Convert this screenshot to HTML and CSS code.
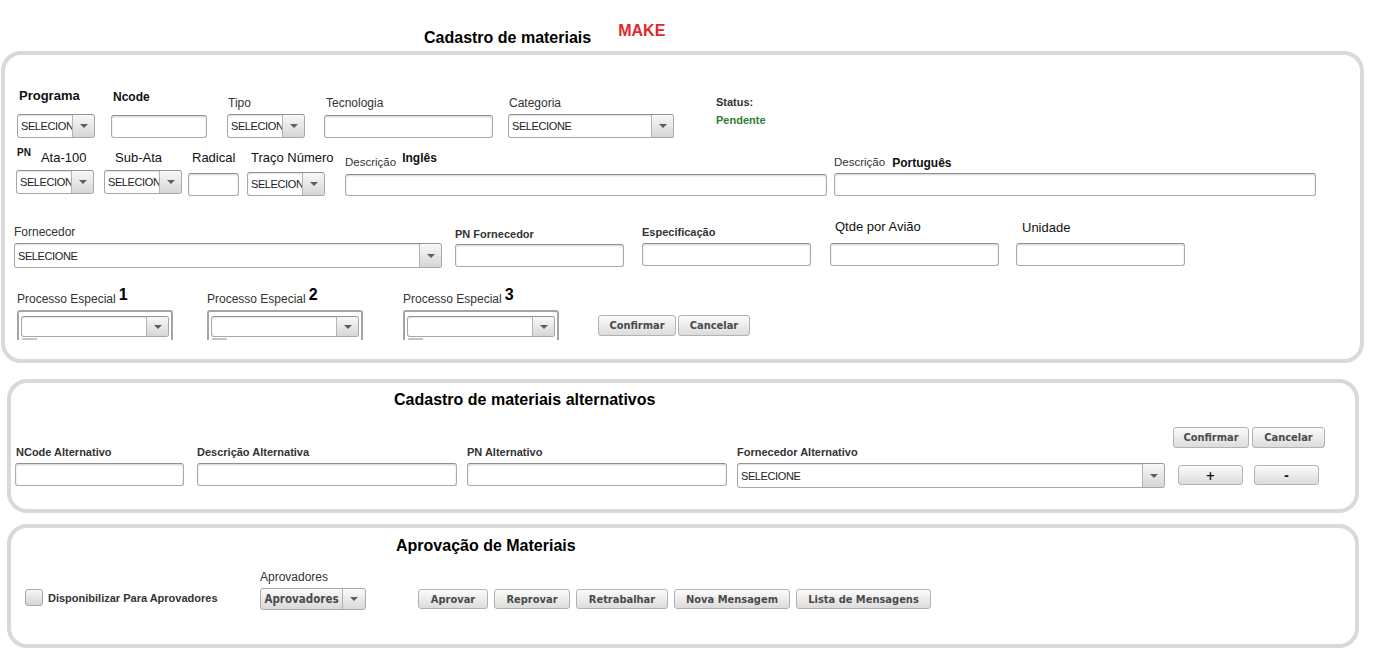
FILE: index.html
```html
<!DOCTYPE html>
<html lang="pt">
<head>
<meta charset="utf-8">
<title>Cadastro de materiais</title>
<link rel="stylesheet" href="styles.css">
</head>
<body>
<header class="head">
  <h1 class="title head-title">Cadastro de materiais</h1>
  <span class="make">MAKE</span>
</header>

<section class="panel p1">
  <div class="row r1">
    <div class="field w78 ml12">
      <label class="lbl lbl-13b mb10 pl2">Programa</label>
      <div class="sel h24"><span class="sel-text">SELECIONE</span><span class="sel-btn"><i class="caret"></i></span></div>
    </div>
    <div class="field w96 ml16">
      <label class="lbl lbl-12b mb11 pl2">Ncode</label>
      <input class="inp" type="text">
    </div>
    <div class="field w78 ml20">
      <label class="lbl mb4 pl1">Tipo</label>
      <div class="sel h24"><span class="sel-text">SELECIONE</span><span class="sel-btn"><i class="caret"></i></span></div>
    </div>
    <div class="field w169 ml19">
      <label class="lbl mb5 pl2">Tecnologia</label>
      <input class="inp" type="text">
    </div>
    <div class="field w166 ml15">
      <label class="lbl mb4 pl1">Categoria</label>
      <div class="sel h24"><span class="sel-text">SELECIONE</span><span class="sel-btn"><i class="caret"></i></span></div>
    </div>
    <div class="status ml42">
      <div class="status-lbl">Status:</div>
      <div class="status-val">Pendente</div>
    </div>
  </div>

  <div class="row r2">
    <div class="field w78 ml11 cb2">
      <div class="lbl-pn mb4 pl1"><span class="pn">PN</span><span class="lbl-13 ata">Ata-100</span></div>
      <div class="sel h24"><span class="sel-text">SELECIONE</span><span class="sel-btn"><i class="caret"></i></span></div>
    </div>
    <div class="field w78 ml10 cb2">
      <label class="lbl lbl-13 mb4 pl11">Sub-Ata</label>
      <div class="sel h24"><span class="sel-text">SELECIONE</span><span class="sel-btn"><i class="caret"></i></span></div>
    </div>
    <div class="field w51 ml6">
      <label class="lbl lbl-13 mb7 pl4">Radical</label>
      <input class="inp" type="text">
    </div>
    <div class="field w78 ml8">
      <label class="lbl lbl-13 mb6 pl4">Traço Número</label>
      <div class="sel h24"><span class="sel-text">SELECIONE</span><span class="sel-btn"><i class="caret"></i></span></div>
    </div>
    <div class="field w482 ml20">
      <div class="lbl-desc mb5"><span class="desc desc-en">Descrição</span><span class="lang">Inglês</span></div>
      <input class="inp h22" type="text">
    </div>
    <div class="field w482 ml7">
      <div class="lbl-desc mb3"><span class="desc">Descrição</span><span class="lang lang-pt">Português</span></div>
      <input class="inp" type="text">
    </div>
  </div>

  <div class="row r3">
    <div class="field w428 ml9">
      <label class="lbl mb4">Fornecedor</label>
      <div class="sel h25"><span class="sel-text">SELECIONE</span><span class="sel-btn"><i class="caret"></i></span></div>
    </div>
    <div class="field w169 ml13 cb1">
      <label class="lbl lbl-11b mb3">PN Fornecedor</label>
      <input class="inp" type="text">
    </div>
    <div class="field w169 ml18 cb2">
      <label class="lbl lbl-11b mb4">Especificação</label>
      <input class="inp" type="text">
    </div>
    <div class="field w169 ml19 cb2">
      <label class="lbl lbl-13 mb8 pl5">Qtde por Avião</label>
      <input class="inp" type="text">
    </div>
    <div class="field w169 ml17 cb2">
      <label class="lbl lbl-13 mb7 pl6">Unidade</label>
      <input class="inp" type="text">
    </div>
  </div>

  <div class="row r4">
    <div class="field w156 ml12">
      <div class="lbl-pe mb4"><span class="pe-text">Processo Especial</span><span class="pe-num">1</span></div>
      <div class="pe-frame">
        <div class="sel h21"><span class="sel-text"></span><span class="sel-btn"><i class="caret"></i></span></div>
        <div class="pe-stub"></div>
      </div>
    </div>
    <div class="field w156 ml34">
      <div class="lbl-pe mb4"><span class="pe-text">Processo Especial</span><span class="pe-num">2</span></div>
      <div class="pe-frame">
        <div class="sel h21"><span class="sel-text"></span><span class="sel-btn"><i class="caret"></i></span></div>
        <div class="pe-stub"></div>
      </div>
    </div>
    <div class="field w156 ml40">
      <div class="lbl-pe mb4"><span class="pe-text">Processo Especial</span><span class="pe-num">3</span></div>
      <div class="pe-frame">
        <div class="sel h21"><span class="sel-text"></span><span class="sel-btn"><i class="caret"></i></span></div>
        <div class="pe-stub"></div>
      </div>
    </div>
    <div class="btn-row ml39 cb4">
      <button class="btn bw78" type="button">Confirmar</button>
      <button class="btn bw72" type="button">Cancelar</button>
    </div>
  </div>
</section>

<section class="panel p2">
  <h2 class="title t-alt">Cadastro de materiais alternativos</h2>
  <div class="row r-alt">
    <div class="field w169 ml4 cb2">
      <label class="lbl lbl-11b mb4 pl1">NCode Alternativo</label>
      <input class="inp" type="text">
    </div>
    <div class="field w260 ml13 cb2">
      <label class="lbl lbl-11b mb4">Descrição Alternativa</label>
      <input class="inp" type="text">
    </div>
    <div class="field w260 ml10 cb2">
      <label class="lbl lbl-11b mb4">PN Alternativo</label>
      <input class="inp" type="text">
    </div>
    <div class="field w428 ml10">
      <label class="lbl lbl-11b mb4">Fornecedor Alternativo</label>
      <div class="sel h25"><span class="sel-text">SELECIONE</span><span class="sel-btn"><i class="caret"></i></span></div>
    </div>
    <div class="alt-btns ml8 cb3">
      <div class="btn-row gap3">
        <button class="btn bw76" type="button">Confirmar</button>
        <button class="btn bw73" type="button">Cancelar</button>
      </div>
      <div class="pm-row">
        <button class="btn btn-pm bw65 ml5" type="button">+</button>
        <button class="btn btn-pm bw65 ml11" type="button">-</button>
      </div>
    </div>
  </div>
</section>

<section class="panel p3">
  <h2 class="title t-apr">Aprovação de Materiais</h2>
  <div class="row r-apr">
    <div class="chk-group w192 ml14 cb4">
      <span class="chk"></span>
      <span class="chk-lbl">Disponibilizar Para Aprovadores</span>
    </div>
    <div class="field w106 ml43">
      <label class="lbl mb4">Aprovadores</label>
      <div class="sbl"><span class="sbl-text">Aprovadores</span><span class="sbl-arrow"><i class="caret"></i></span></div>
    </div>
    <div class="btn-row apr-btns ml52 cb1">
      <button class="btn h20 bw70" type="button">Aprovar</button>
      <button class="btn h20 bw76" type="button">Reprovar</button>
      <button class="btn h20 bw92" type="button">Retrabalhar</button>
      <button class="btn h20 bw116" type="button">Nova Mensagem</button>
      <button class="btn h20 bw135" type="button">Lista de Mensagens</button>
    </div>
  </div>
</section>
</body>
</html>
```

FILE: styles.css
```css
* { box-sizing: border-box; }

body {
  margin: 0;
  background: #fff;
  font-family: "Liberation Sans", Arial, sans-serif;
  color: #333;
  width: 1374px;
}

/* ---------- header ---------- */
.head {
  display: flex;
  align-items: flex-start;
  height: 51px;
}
.title {
  margin: 0;
  font: bold 16px/20px "Liberation Sans", Arial, sans-serif;
  color: #000;
  white-space: nowrap;
}
.head-title { margin: 28px 0 0 424px; }
.make {
  margin: 21px 0 0 27px;
  font: bold 16px/20px "Liberation Sans", Arial, sans-serif;
  color: #e1282d;
}

/* ---------- panels ---------- */
.panel {
  border: 4px solid #d9d9d9;
  border-radius: 20px;
  background: #fff;
}
.p1 { margin-left: 1px; width: 1363px; padding-bottom: 19px; }
.p2 { margin: 16px 0 0 7px; width: 1352px; padding-bottom: 21px; }
.p3 { margin: 11px 0 0 7px; width: 1352px; padding-bottom: 34px; }

.t-alt { margin: 7px 0 0 383px; }
.t-apr { margin: 8px 0 0 385px; }

/* ---------- rows & fields ---------- */
.row { display: flex; align-items: flex-end; }
.r1 { height: 83px; }
.r2 { height: 58px; }
.r3 { height: 72px; }
.r4 { height: 72px; }
.r-alt { height: 78px; }
.r-apr { height: 54px; }

.field { display: flex; flex-direction: column; flex: none; }

.lbl {
  display: block;
  font-size: 12px;
  line-height: 14px;
  color: #333;
  white-space: nowrap;
}
.lbl-13b { font-size: 13px; line-height: 16px; font-weight: bold; color: #111; }
.lbl-12b { font-size: 12px; line-height: 14px; font-weight: bold; color: #111; }
.lbl-13 { font-size: 13px; line-height: 16px; color: #111; white-space: nowrap; }
.lbl-11b { font-size: 11px; line-height: 14px; font-weight: bold; color: #333; }

.lbl-pn { display: flex; align-items: flex-start; white-space: nowrap; }
.pn { font-size: 10px; line-height: 12px; font-weight: bold; color: #111; }
.ata { margin: 3px 0 0 10px; }

.lbl-desc { display: flex; align-items: flex-start; white-space: nowrap; }
.desc { font-size: 11.5px; line-height: 14px; color: #333; }
.desc-en { margin-top: 4px; }
.lang { font-size: 12px; line-height: 14px; font-weight: bold; color: #111; margin-left: 6px; }
.lang-pt { margin: 1px 0 0 7px; }

.lbl-pe { display: flex; align-items: flex-end; white-space: nowrap; }
.pe-text { font-size: 12px; line-height: 14px; color: #333; }
.pe-num { font-size: 16px; line-height: 18px; font-weight: bold; color: #000; margin: 0 0 2px 3px; }

.status { align-self: flex-start; margin-top: 40px; flex: none; }
.status-lbl { font-size: 11px; line-height: 14px; font-weight: bold; color: #333; }
.status-val { font-size: 11px; line-height: 14px; font-weight: bold; color: #2e7d32; margin-top: 4px; }

/* ---------- controls ---------- */
.inp {
  display: block;
  width: 100%;
  height: 23px;
  margin: 0;
  padding: 0 4px;
  border: 1px solid #ababab;
  border-top-color: #8f8f8f;
  border-radius: 3px;
  background: #fff;
  box-shadow: inset 0 1px 2px rgba(0, 0, 0, 0.18);
  font: 12px "Liberation Sans", Arial, sans-serif;
}
.inp.h22 { height: 22px; }

.sel {
  display: flex;
  width: 100%;
  border: 1px solid #a8a8a8;
  border-top-color: #939393;
  border-radius: 3px;
  background: #fff;
  overflow: hidden;
  box-shadow: inset 0 1px 1px rgba(0, 0, 0, 0.12);
}
.h21 { height: 21px; }
.h24 { height: 24px; }
.h25 { height: 25px; }
.sel-text {
  flex: 1;
  min-width: 0;
  overflow: hidden;
  white-space: nowrap;
  padding-left: 3px;
  font-size: 11px;
  letter-spacing: -0.4px;
  color: #222;
  display: flex;
  align-items: center;
}
.sel-btn {
  flex: none;
  width: 22px;
  border-left: 1px solid #b3b3b3;
  border-radius: 0 2px 2px 0;
  background: linear-gradient(#f8f8f8, #d6d6d6);
  display: flex;
  align-items: center;
  justify-content: center;
}
.caret {
  display: block;
  width: 0;
  height: 0;
  border-left: 4px solid transparent;
  border-right: 4px solid transparent;
  border-top: 4px solid #56606c;
}

.pe-frame {
  height: 30px;
  border: 2px solid #a4a4a4;
  border-bottom: 0;
  border-radius: 3px 3px 0 0;
  padding: 4px 2px 0;
  overflow: hidden;
  background: #fff;
}
.pe-stub {
  width: 15px;
  height: 2px;
  margin: 1px 0 0 1px;
  background: #c4c4c4;
}

/* ---------- buttons ---------- */
.btn-row { display: flex; gap: 2px; flex: none; }
.gap3 { gap: 3px; }
.apr-btns { gap: 6px; }

.btn {
  height: 21px;
  margin: 0;
  padding: 0;
  border: 1px solid #b2b2b2;
  border-radius: 3px;
  background: linear-gradient(#fbfbfb, #dcdcdc);
  font-family: "DejaVu Sans Condensed", "DejaVu Sans", Verdana, sans-serif;
  font-weight: bold;
  font-size: 11px;
  color: #4a4a4a;
  display: flex;
  align-items: center;
  justify-content: center;
  white-space: nowrap;
  flex: none;
}
.btn.h20 { height: 20px; }
.btn-pm { height: 20px; font-size: 13px; color: #111; }

.bw65 { width: 65px; }
.bw70 { width: 70px; }
.bw72 { width: 72px; }
.bw73 { width: 73px; }
.bw76 { width: 76px; }
.bw78 { width: 78px; }
.bw92 { width: 92px; }
.bw116 { width: 116px; }
.bw135 { width: 135px; }

.alt-btns { display: flex; flex-direction: column; flex: none; }
.pm-row { display: flex; margin-top: 17px; }

/* ---------- approval ---------- */
.chk-group { display: flex; align-items: center; flex: none; }
.chk {
  flex: none;
  width: 18px;
  height: 17px;
  border: 1px solid #a9a9a9;
  border-radius: 3px;
  background: linear-gradient(#f6f6f6, #d5d5d5);
}
.chk-lbl {
  margin-left: 5px;
  font-size: 11px;
  line-height: 14px;
  font-weight: bold;
  color: #333;
  white-space: nowrap;
}

.sbl {
  display: flex;
  height: 22px;
  border: 1px solid #aaa;
  border-radius: 3px;
  background: linear-gradient(#fafafa, #d9d9d9);
  overflow: hidden;
}
.sbl-text {
  width: 81px;
  flex: none;
  display: flex;
  align-items: center;
  justify-content: center;
  font-family: "DejaVu Sans Condensed", "DejaVu Sans", Verdana, sans-serif;
  font-weight: bold;
  font-size: 11.5px;
  color: #4a4a4a;
  white-space: nowrap;
}
.sbl-arrow {
  flex: 1;
  border-left: 1px solid #b0b0b0;
  display: flex;
  align-items: center;
  justify-content: center;
}

/* ---------- utilities (last, so they win over component resets) ---------- */
.w51 { width: 51px; }
.w78 { width: 78px; }
.w96 { width: 96px; }
.w106 { width: 106px; }
.w156 { width: 156px; }
.w166 { width: 166px; }
.w169 { width: 169px; }
.w192 { width: 192px; }
.w260 { width: 260px; }
.w428 { width: 428px; }
.w482 { width: 482px; }

.ml4 { margin-left: 4px; }
.ml5 { margin-left: 5px; }
.ml6 { margin-left: 6px; }
.ml7 { margin-left: 7px; }
.ml8 { margin-left: 8px; }
.ml9 { margin-left: 9px; }
.ml10 { margin-left: 10px; }
.ml11 { margin-left: 11px; }
.ml12 { margin-left: 12px; }
.ml13 { margin-left: 13px; }
.ml14 { margin-left: 14px; }
.ml15 { margin-left: 15px; }
.ml16 { margin-left: 16px; }
.ml17 { margin-left: 17px; }
.ml18 { margin-left: 18px; }
.ml19 { margin-left: 19px; }
.ml20 { margin-left: 20px; }
.ml34 { margin-left: 34px; }
.ml39 { margin-left: 39px; }
.ml40 { margin-left: 40px; }
.ml42 { margin-left: 42px; }
.ml43 { margin-left: 43px; }
.ml52 { margin-left: 52px; }

.mb3 { margin-bottom: 3px; }
.mb4 { margin-bottom: 4px; }
.mb5 { margin-bottom: 5px; }
.mb6 { margin-bottom: 6px; }
.mb7 { margin-bottom: 7px; }
.mb8 { margin-bottom: 8px; }
.mb10 { margin-bottom: 10px; }
.mb11 { margin-bottom: 11px; }

.cb1 { margin-bottom: 1px; }
.cb2 { margin-bottom: 2px; }
.cb3 { margin-bottom: 3px; }
.cb4 { margin-bottom: 4px; }

.pl1 { padding-left: 1px; }
.pl2 { padding-left: 2px; }
.pl4 { padding-left: 4px; }
.pl5 { padding-left: 5px; }
.pl6 { padding-left: 6px; }
.pl11 { padding-left: 11px; }
```
